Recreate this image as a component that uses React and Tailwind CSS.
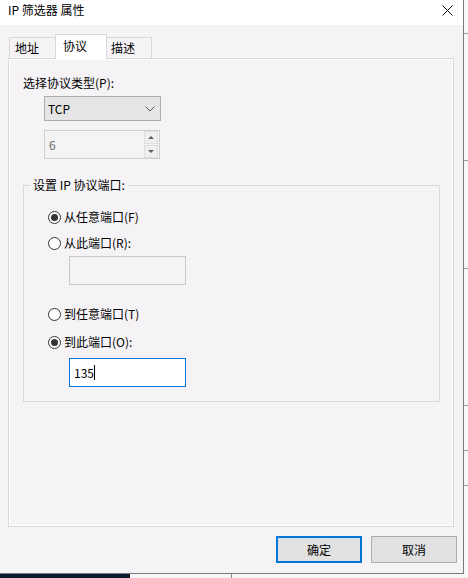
import React from "react";

const FONT = { fontFamily: '"Microsoft YaHei UI", "Noto Sans CJK SC", "Noto Sans", sans-serif' };

function Radio({ checked, label }) {
  return (
    <div className="flex items-center h-[16px]">
      <span className="ml-[24px] w-[13px] h-[13px] rounded-full border border-[#333] bg-white flex items-center justify-center">
        {checked && <span className="w-[7px] h-[7px] rounded-full bg-[#333]" />}
      </span>
      <span className="ml-[3px] text-[12px] leading-[16px] text-black">{label}</span>
    </div>
  );
}

export default function App() {
  return (
    <div style={FONT} className="w-[468px] h-[578px] overflow-hidden bg-white flex flex-col">
      <div className="flex h-[574px]">
        {/* dialog */}
        <div className="w-[464px] h-[574px] border-r border-b border-[#7a7a7a] flex flex-col bg-[#f5f3f6]">
          {/* title bar */}
          <div className="h-[25px] bg-white flex items-start justify-between pt-[2px] pl-[8px] pr-[10px]">
            <span className="text-[12px] leading-[16px] text-black">IP 筛选器 属性</span>
            <svg width="11" height="11" viewBox="0 0 11 11" className="mt-[3px]">
              <path d="M0.5 0.5 L10.5 10.5 M10.5 0.5 L0.5 10.5" stroke="#111" strokeWidth="1" />
            </svg>
          </div>

          <div className="pl-[8px] pt-[9px] flex flex-col">
            {/* tabs */}
            <div className="flex items-end ml-[1px] -mb-px relative z-10 text-[12px] leading-[16px]">
              <div className="w-[46px] h-[22px] border-l border-t border-b border-[#d9d9d9] pl-[5px] flex items-center">地址</div>
              <div className="w-[52px] h-[25px] border-l border-t border-r border-[#d9d9d9] bg-white pl-[7px] pb-[2px] flex items-center">协议</div>
              <div className="w-[45px] h-[22px] border-t border-r border-b border-[#d9d9d9] pl-[4px] flex items-center">描述</div>
            </div>

            {/* panel */}
            <div className="w-[446px] h-[469px] border border-[#d9d9d9] shadow-[inset_1px_1px_0_#fff,inset_-1px_-1px_0_#fff] pl-[14px] pt-[16px] flex flex-col text-[12px] leading-[16px]">
              <div>选择协议类型(P):</div>
              <div className="ml-[21px] mt-[5px] w-[117px] h-[25px] border border-[#adadad] bg-[#e5e5e5] flex items-center justify-between pl-[3px] pr-[5px]">
                <span>TCP</span>
                <svg width="10" height="6" viewBox="0 0 10 6">
                  <path d="M0.5 0.5 L5 5 L9.5 0.5" fill="none" stroke="#555" strokeWidth="1" />
                </svg>
              </div>
              <div className="ml-[21px] mt-[9px] w-[116px] h-[29px] border border-[#cfcfcf] flex items-center justify-between pl-[4px] pr-[1px]">
                <span className="text-[#6d6d6d]">6</span>
                <div className="flex flex-col h-[27px] w-[14px] gap-[1px]">
                  <div className="flex-1 bg-[#efefef] border border-[#dedede] flex items-center justify-center">
                    <svg width="6" height="3" viewBox="0 0 6 3"><path d="M0 3 L3 0 L6 3 Z" fill="#606060" /></svg>
                  </div>
                  <div className="flex-1 bg-[#efefef] border border-[#dedede] flex items-center justify-center">
                    <svg width="6" height="3" viewBox="0 0 6 3"><path d="M0 0 L3 3 L6 0 Z" fill="#606060" /></svg>
                  </div>
                </div>
              </div>

              <fieldset className="mt-[18px] w-[417px] h-[225px] border border-[#d9d9d9] flex flex-col">
                <legend className="ml-[6px] px-[3px] leading-[16px]">设置 IP 协议端口:</legend>
                <div className="pt-[16px] flex flex-col">
                  <Radio checked label="从任意端口(F)" />
                  <div className="mt-[10px]">
                    <Radio label="从此端口(R):" />
                  </div>
                  <div className="ml-[45px] mt-[5px] w-[117px] h-[29px] border border-[#c8c8c8]" />
                  <div className="mt-[21px]">
                    <Radio label="到任意端口(T)" />
                  </div>
                  <div className="mt-[12px]">
                    <Radio checked label="到此端口(O):" />
                  </div>
                  <div className="ml-[45px] mt-[8px] w-[117px] h-[29px] border border-[#0078d7] bg-white flex items-center pl-[4px]">
                    <span>135</span>
                    <span className="w-px h-[15px] bg-black" />
                  </div>
                </div>
              </fieldset>
            </div>

            {/* buttons */}
            <div className="mt-[9px] flex justify-end gap-[9px] pr-[6px] text-[12px] leading-[16px]">
              <button className="w-[86px] h-[27px] border-2 border-[#0078d7] bg-[#e1e1e1] flex items-center justify-center">确定</button>
              <button className="w-[86px] h-[27px] border border-[#adadad] bg-[#e1e1e1] flex items-center justify-center">取消</button>
            </div>
          </div>
        </div>

        {/* background window strip */}
        <div className="flex-1 bg-[#f7f7f7] flex flex-col">
          <div className="h-[33px]" />
          <div className="h-px bg-[#a0a0a0]" />
          <div className="h-[126px]" />
          <div className="h-px bg-[#a0a0a0]" />
          <div className="h-[107px]" />
          <div className="h-px bg-[#a0a0a0]" />
          <div className="h-[136px]" />
          <div className="h-px bg-[#a0a0a0]" />
          <div className="h-[44px]" />
          <div className="h-px bg-[#a0a0a0]" />
          <div className="h-[34px]" />
          <div className="h-px bg-[#a0a0a0]" />
        </div>
      </div>

      {/* taskbar edge */}
      <div className="flex h-[4px]">
        <div className="w-[130px] bg-[#0c1a30]" />
        <div className="w-[101px] bg-[#f5f5f5]" />
        <div className="w-px bg-[#888]" />
        <div className="flex-1 bg-[#f5f5f5]" />
      </div>
    </div>
  );
}
